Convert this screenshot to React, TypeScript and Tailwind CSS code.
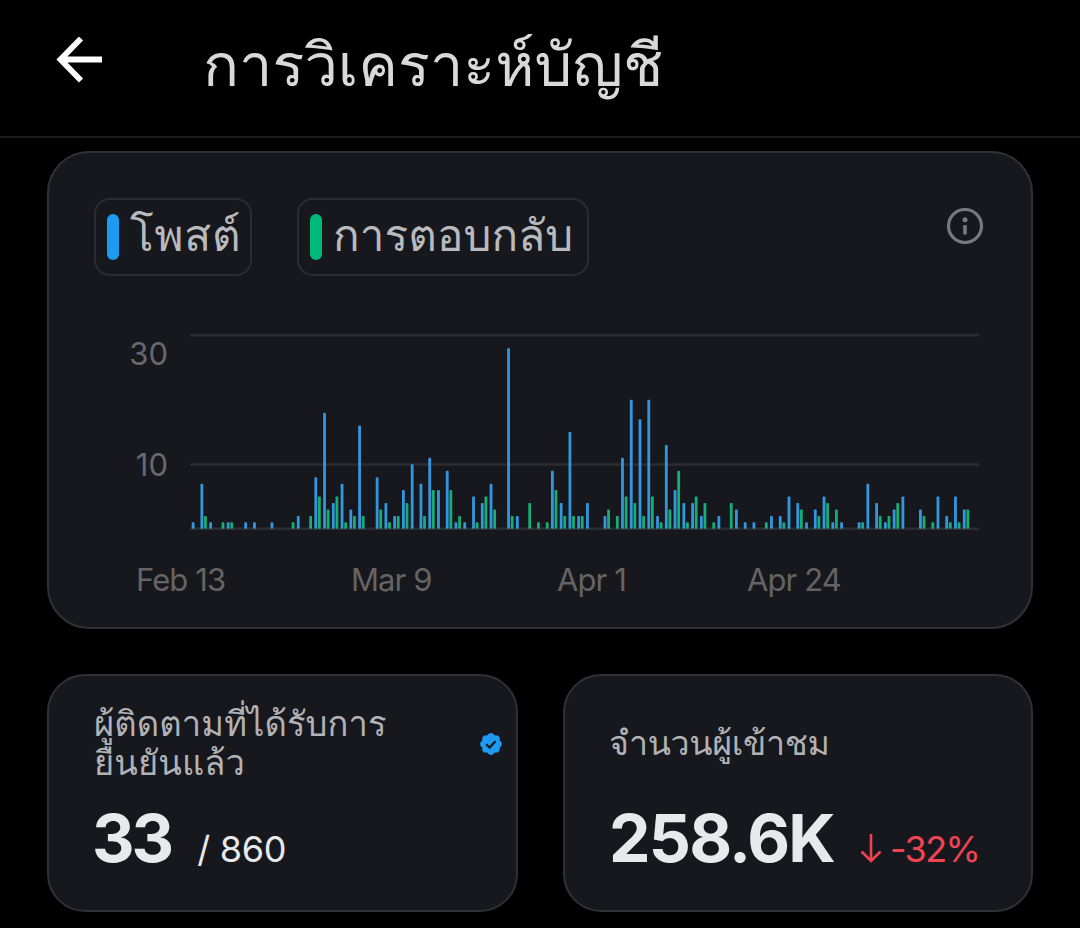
const posts: Record<number, number> = {
  0: 1, 1: 7, 2: 1, 4: 1, 6: 1, 7: 1, 9: 1, 12: 2, 14: 8, 15: 18, 16: 4, 17: 7, 18: 3, 19: 16,
  21: 8, 22: 4, 23: 2, 24: 6, 25: 10, 26: 7, 27: 11, 28: 6, 29: 9, 30: 1, 31: 1, 32: 5, 33: 4, 34: 7,
  36: 28, 37: 2, 41: 9, 42: 4, 43: 15, 44: 2, 45: 4, 47: 2, 49: 11, 50: 20, 51: 17, 52: 20, 53: 2,
  54: 13, 55: 6, 56: 4, 57: 4, 58: 2, 60: 2, 62: 3, 63: 1, 64: 1, 66: 2, 67: 2, 68: 5, 69: 4, 70: 1,
  71: 3, 72: 5, 73: 1, 74: 1, 76: 1, 77: 7, 78: 4, 79: 1, 80: 3, 81: 5, 83: 3, 85: 5, 86: 2, 87: 5, 88: 3,
};

const replies: Record<number, number> = {
  1: 2, 3: 1, 4: 1, 11: 1, 13: 2, 14: 5, 15: 3, 16: 5, 17: 1, 18: 2, 19: 2, 21: 3, 22: 1, 23: 2, 24: 4,
  26: 2, 27: 6, 29: 6, 30: 2, 32: 1, 33: 5, 34: 3, 36: 2, 38: 4, 39: 1, 40: 1, 41: 6, 42: 2, 43: 2,
  44: 2, 47: 3, 48: 2, 49: 5, 50: 4, 51: 2, 52: 5, 53: 1, 54: 3, 55: 9, 56: 1, 57: 5, 58: 4, 59: 1,
  61: 4, 65: 1, 67: 1, 69: 3, 71: 2, 72: 4, 73: 3, 76: 1, 78: 2, 79: 2, 80: 4, 83: 2, 84: 1, 86: 1,
  87: 1, 88: 3,
};

const DAY = 8.763;
const UNIT = 6.45;
const BASE = 195.8;

function Bars({ data, start, color }: { data: Record<number, number>; start: number; color: string }) {
  return (
    <g fill={color}>
      {Object.entries(data).map(([day, value]) => (
        <rect
          key={day}
          x={start + Number(day) * DAY}
          y={BASE - value * UNIT}
          width={2.8}
          height={value * UNIT}
          rx={0.8}
        />
      ))}
    </g>
  );
}

function Chart() {
  return (
    <svg width="789" height="198" viewBox="0 0 789 198" className="-ml-px block">
      <g fill="#2b2d31">
        <rect x="0" y="1" width="789" height="2.6" />
        <rect x="0" y="130.2" width="789" height="2.6" />
        <rect x="0" y="194.4" width="789" height="2.6" />
      </g>
      <Bars data={posts} start={1.7} color="#3397e0" />
      <Bars data={replies} start={5.3} color="#17ad76" />
    </svg>
  );
}

function BackArrow() {
  return (
    <svg width="46" height="46" viewBox="0 0 46 46" fill="none" stroke="#fff" strokeWidth="5.8">
      <path d="M25 1.500 4.500 22.500 25 43.500M4.500 22.500H46" />
    </svg>
  );
}

function InfoIcon() {
  return (
    <svg width="38" height="38" viewBox="0 0 38 38" fill="#77797c">
      <circle cx="19" cy="19" r="16.500" fill="none" stroke="#77797c" strokeWidth="3.200" />
      <circle cx="19" cy="12.800" r="2.500" />
      <rect x="17.200" y="18.200" width="3.600" height="9.300" />
    </svg>
  );
}

function VerifiedIcon() {
  return (
    <svg width="24" height="24" viewBox="0.700 0.700 22.600 22.600">
      <path
        fill="#1d9bf0"
        d="M22.250 12c0-1.430-.88-2.670-2.190-3.340.46-1.390.2-2.900-.81-3.910s-2.520-1.270-3.910-.81c-.66-1.310-1.910-2.190-3.340-2.190s-2.670.88-3.330 2.190c-1.400-.46-2.910-.2-3.920.81s-1.260 2.520-.8 3.910c-1.310.67-2.200 1.910-2.200 3.340s.89 2.670 2.200 3.340c-.46 1.390-.21 2.900.8 3.910s2.520 1.260 3.910.81c.67 1.310 1.910 2.190 3.340 2.190s2.680-.88 3.340-2.190c1.390.45 2.900.2 3.910-.81s1.270-2.520.81-3.910c1.310-.67 2.190-1.910 2.190-3.340z"
      />
      <path d="m7.500 12.300 3.100 3.100 5.600-6.100" fill="none" stroke="#17181d" strokeWidth="2.100" />
    </svg>
  );
}

function DownArrow() {
  return (
    <svg width="22" height="30" viewBox="0 0 22 30" fill="none" stroke="#f04454" strokeWidth="2.600">
      <path d="M11 1v27M1.500 18.500 11 28l9.500-9.500" />
    </svg>
  );
}

export default function App() {
  return (
    <div className="h-[928px] w-[1080px] overflow-hidden bg-black font-['Inter','Loma',sans-serif] text-[#e7e9ea]">
      <header className="flex h-[138px] items-start border-b-2 border-[#1c1c1e] pl-14">
        <div className="pt-[37px]">
          <BackArrow />
        </div>
        <h1 className="ml-[101px] mt-[22px] whitespace-nowrap text-[59.5px] leading-[84px] text-[#d9d9d9]">การวิเคราะห์บัญชี</h1>
      </header>

      <main className="px-[47px] pt-[13px]">
        <section className="h-[478px] rounded-[42px] border-2 border-[#2f3135] bg-[#17181d]">
          <div className="flex items-start justify-between pl-[45px] pr-[47px] pt-[45px]">
            <div className="flex gap-[45px] whitespace-nowrap text-[44px] leading-[72px] text-[#b8babd]">
              <div className="flex h-[78px] w-[158px] items-center rounded-2xl border-2 border-[#2b2d31] pl-[11px]">
                <span className="mr-[11px] h-[46px] w-3 shrink-0 rounded-full bg-[#1d9bf0]" />
                <span className="-mt-1 tracking-[0.8px]">โพสต์</span>
              </div>
              <div className="flex h-[78px] w-[292px] items-center rounded-2xl border-2 border-[#2b2d31] pl-[11px]">
                <span className="mr-[11px] h-[46px] w-3 shrink-0 rounded-full bg-[#00ba7c]" />
                <span className="-mt-1 tracking-[0.1px]">การตอบกลับ</span>
              </div>
            </div>
            <div className="mt-[9px]">
              <InfoIcon />
            </div>
          </div>

          <div className="mt-[57px] flex text-[31px] leading-[36px] text-[#67696d]">
            <div className="mr-[23px] flex w-[119px] flex-col items-end pt-[3px]">
              <span>30</span>
              <span className="mt-[75px]">10</span>
            </div>
            <Chart />
          </div>

          <div className="flex pl-[87px] pt-[31px] text-[31px] leading-[36px] tracking-[-0.9px] text-[#656464]">
            <span className="w-[215px]">Feb 13</span>
            <span className="w-[206px]">Mar 9</span>
            <span className="w-[190px]">Apr 1</span>
            <span>Apr 24</span>
          </div>
        </section>

        <div className="mt-[45px] flex justify-between">
          <section className="h-[238px] w-[471px] rounded-[38px] border-2 border-[#2f3135] bg-[#17181d] pl-[45px] pr-[13px]">
            <div className="flex h-[132px] items-center justify-between pt-1">
              <p className="-mt-[3px] whitespace-nowrap text-[34.5px] leading-[39px] tracking-[0.1px] text-[#b0b2b6]">
                ผู้ติดตามที่ได้รับการ
                <br />
                ยืนยันแล้ว
              </p>
              <VerifiedIcon />
            </div>
            <div className="flex items-baseline whitespace-nowrap leading-[60px]">
              <span className="-ml-0.5 text-[66px] font-bold tracking-[-3px]">33</span>
              <span className="ml-[26px] text-[36px] tracking-[-0.3px]">/ 860</span>
            </div>
          </section>

          <section className="h-[238px] w-[470px] rounded-[38px] border-2 border-[#2f3135] bg-[#17181d] pl-11">
            <div className="flex h-[132px] items-center pt-1">
              <p className="-mt-1 whitespace-nowrap text-[34px] leading-[39px] tracking-[-0.35px] text-[#b0b2b6]">จำนวนผู้เข้าชม</p>
            </div>
            <div className="flex items-baseline whitespace-nowrap leading-[60px]">
              <span className="text-[66px] font-bold tracking-[-1.8px]">258.6K</span>
              <span className="ml-[26px] mr-2 translate-y-px">
                <DownArrow />
              </span>
              <span className="text-[36px] tracking-[-1.6px] text-[#f04454]">-32%</span>
            </div>
          </section>
        </div>
      </main>
    </div>
  );
}
